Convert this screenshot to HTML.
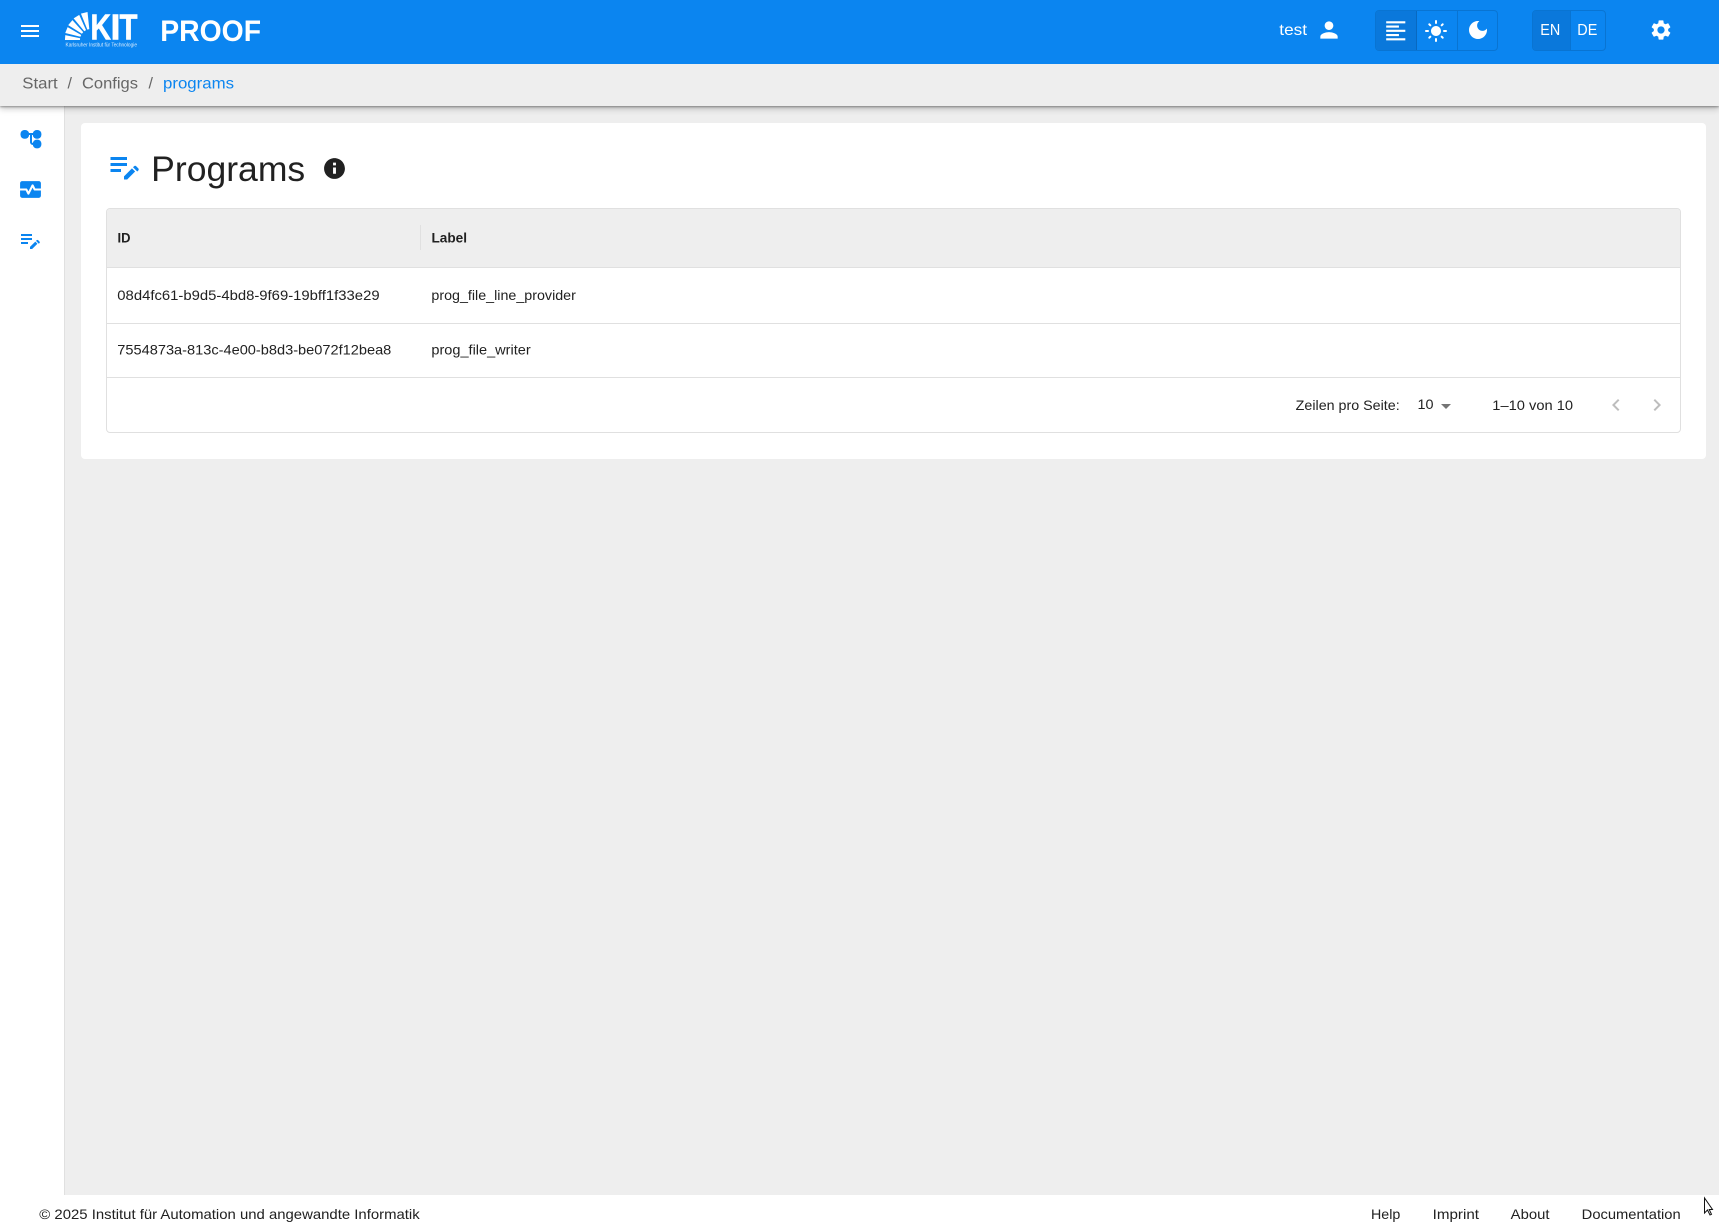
<!DOCTYPE html>
<html lang="de">
<head>
<meta charset="utf-8">
<title>PROOF - Programs</title>
<style>
html,body{margin:0;padding:0;width:1719px;height:1225px;overflow:hidden;background:#eeeeee;font-family:"Liberation Sans",sans-serif;}
.box{position:absolute;box-sizing:border-box;}
#hdr{left:0;top:0;width:1719px;height:64px;background:#0b85f0;z-index:3;}
#crumb{left:0;top:64px;width:1719px;height:42px;background:#eeeeee;z-index:2;box-shadow:0 1px 2px rgba(0,0,0,.35),0 3px 6px rgba(0,0,0,.2);}
#side{left:0;top:106px;width:65px;height:1089px;background:#fff;border-right:1px solid #e0e0e0;}
#card{left:81px;top:123px;width:1625px;height:336px;background:#fff;border-radius:4px;}
#tbl{left:106px;top:208px;width:1575px;height:225px;background:#fff;border:1px solid #e0e0e0;border-radius:4px;overflow:hidden;}
#thead{left:0;top:0;width:1573px;height:59px;background:#eeeeee;border-bottom:1px solid #e0e0e0;}
.rowline{left:0;width:1573px;height:1px;background:#e0e0e0;}
#coldiv{left:420px;top:225px;width:1px;height:25px;background:#e0e0e0;}
#foot{left:0;top:1195px;width:1719px;height:30px;background:#fff;}
.grp{top:10px;height:41px;border:1px solid rgba(0,0,0,.12);border-radius:4px;overflow:hidden;}
.sel{top:0;height:39px;left:0;background:#0a78db;}
.dv{top:0;height:39px;width:1px;background:rgba(0,0,0,.12);}
svg.ic{position:absolute;display:block;overflow:visible;}
#txt{position:absolute;left:0;top:0;z-index:6;pointer-events:none;}
#txt text{font-family:"Liberation Sans",sans-serif;}
</style>
</head>
<body>
<div class="box" id="side"></div>
<div class="box" id="card"></div>
<div class="box" id="tbl">
  <div class="box" id="thead"></div>
  <div class="box rowline" style="top:114px"></div>
  <div class="box rowline" style="top:168px"></div>
</div>
<div class="box" id="coldiv" style="z-index:1"></div>
<div class="box" id="crumb"></div>
<div class="box" id="hdr">
  <div class="box grp" style="left:1375px;width:123px">
    <div class="box sel" style="width:41px"></div>
    <div class="box dv" style="left:40px"></div>
    <div class="box dv" style="left:81px"></div>
  </div>
  <div class="box grp" style="left:1532px;width:74px">
    <div class="box sel" style="width:37px"></div>
    <div class="box dv" style="left:37px"></div>
  </div>
</div>
<div class="box" id="foot"></div>

<!-- header icons -->
<svg class="ic" style="left:18px;top:19px;z-index:5" width="24" height="24" viewBox="0 0 24 24" fill="#fff"><path d="M3 18h18v-2H3zm0-5h18v-2H3zm0-7v2h18V6z"/></svg>
<svg class="ic" style="left:1315.5px;top:17px;z-index:5" width="26" height="26" viewBox="0 0 24 24" fill="#fff"><path d="M12 12c2.21 0 4-1.79 4-4s-1.79-4-4-4-4 1.79-4 4 1.79 4 4 4m0 2c-2.67 0-8 1.34-8 4v2h16v-2c0-2.66-5.33-4-8-4"/></svg>
<svg class="ic" style="left:1382.75px;top:17.6px;z-index:5" width="25.5" height="25.5" viewBox="0 0 24 24" fill="#fff"><path d="M15 15H3v2h12v-2zm0-8H3v2h12V7zM3 13h18v-2H3v2zm0 8h18v-2H3v2zM3 3v2h18V3H3z"/></svg>
<svg class="ic" style="left:1424.3px;top:18.5px;z-index:5" width="24" height="24" viewBox="0 0 24 24" fill="#fff"><path d="M12 7c-2.76 0-5 2.24-5 5s2.24 5 5 5 5-2.24 5-5-2.24-5-5-5zM2 13h2c.55 0 1-.45 1-1s-.45-1-1-1H2c-.55 0-1 .45-1 1s.45 1 1 1zm18 0h2c.55 0 1-.45 1-1s-.45-1-1-1h-2c-.55 0-1 .45-1 1s.45 1 1 1zM11 2v2c0 .55.45 1 1 1s1-.45 1-1V2c0-.55-.45-1-1-1s-1 .45-1 1zm0 18v2c0 .55.45 1 1 1s1-.45 1-1v-2c0-.55-.45-1-1-1s-1 .45-1 1zM5.99 4.58c-.39-.39-1.03-.39-1.41 0-.39.39-.39 1.03 0 1.41l1.06 1.06c.39.39 1.03.39 1.41 0s.39-1.03 0-1.41L5.99 4.58zm12.37 12.37c-.39-.39-1.03-.39-1.41 0-.39.39-.39 1.03 0 1.41l1.06 1.06c.39.39 1.03.39 1.41 0 .39-.39.39-1.03 0-1.41l-1.06-1.06zm1.06-10.96c.39-.39.39-1.03 0-1.41-.39-.39-1.03-.39-1.41 0l-1.06 1.06c-.39.39-.39 1.03 0 1.41s1.03.39 1.41 0l1.06-1.06zM7.05 18.36c.39-.39.39-1.03 0-1.41-.39-.39-1.03-.39-1.41 0l-1.06 1.06c-.39.39-.39 1.03 0 1.41s1.03.39 1.41 0l1.06-1.06z"/></svg>
<svg class="ic" style="left:1465.7px;top:18px;z-index:5" width="24" height="24" viewBox="0 0 24 24" fill="#fff"><path d="M12 3c-4.97 0-9 4.03-9 9s4.03 9 9 9 9-4.03 9-9c0-.46-.04-.92-.1-1.36-.98 1.37-2.58 2.26-4.4 2.26-2.98 0-5.4-2.42-5.4-5.4 0-1.81.89-3.42 2.26-4.4-.44-.06-.9-.1-1.36-.1z"/></svg>
<svg class="ic" style="left:1648.5px;top:18px;z-index:5" width="24" height="24" viewBox="0 0 24 24" fill="#fff"><path d="M19.14 12.94c.04-.3.06-.61.06-.94 0-.32-.02-.64-.07-.94l2.03-1.58c.18-.14.23-.41.12-.61l-1.92-3.32c-.12-.22-.37-.29-.59-.22l-2.39.96c-.5-.38-1.03-.7-1.62-.94l-.36-2.54c-.04-.24-.24-.41-.48-.41h-3.84c-.24 0-.43.17-.47.41l-.36 2.54c-.59.24-1.13.57-1.62.94l-2.39-.96c-.22-.08-.47 0-.59.22L2.74 8.87c-.12.21-.08.47.12.61l2.03 1.58c-.05.3-.09.63-.09.94s.02.64.07.94l-2.03 1.58c-.18.14-.23.41-.12.61l1.92 3.32c.12.22.37.29.59.22l2.39-.96c.5.38 1.03.7 1.62.94l.36 2.54c.05.24.24.41.48.41h3.84c.24 0 .44-.17.47-.41l.36-2.54c.59-.24 1.13-.56 1.62-.94l2.39.96c.22.08.47 0 .59-.22l1.92-3.32c.12-.22.07-.47-.12-.61l-2.01-1.58zM12 15.6c-1.98 0-3.6-1.62-3.6-3.6s1.62-3.6 3.6-3.6 3.6 1.62 3.6 3.6-1.62 3.6-3.6 3.6z"/></svg>

<!-- KIT logo fan -->
<svg class="ic" style="left:0;top:0;z-index:5" width="160" height="64" viewBox="0 0 160 64" fill="#fff">
  <defs><clipPath id="fc"><rect x="60" y="10" width="40" height="30"/></clipPath></defs>
  <g clip-path="url(#fc)">
    <polygon points="80,39 65,36.9 65,43.1 80,41" transform="rotate(4 91 40)"/>
    <polygon points="80,39 64.5,36.8 64.5,43.2 80,41" transform="rotate(22 91 40)"/>
    <polygon points="80,39 64,36.7 64,43.3 80,41" transform="rotate(40 91 40)"/>
    <polygon points="80,39 63.5,36.7 63.5,43.3 80,41" transform="rotate(58 91 40)"/>
    <polygon points="80,39 63,36.6 63,43.4 80,41" transform="rotate(76 91 40)"/>
  </g>
</svg>

<!-- sidebar icons -->
<svg class="ic" style="left:18.5px;top:127px;z-index:1" width="24" height="24" viewBox="0 0 24 24" fill="#0b85f0"><rect x="1.5" y="3" width="8.6" height="8.8" rx="4"/><rect x="13.8" y="3" width="8.6" height="8.8" rx="4"/><rect x="13.8" y="12.6" width="8.6" height="8.8" rx="4"/><path d="M9 6h6v2h-2v7c0 .55.45 1 1 1h1v2h-1.01c-1.65 0-2.99-1.34-2.99-2.99V8H9z"/></svg>
<svg class="ic" style="left:18px;top:177px;z-index:1" width="25" height="25" viewBox="0 0 24 24" fill="#0b85f0"><path d="M15.11 12.45 14 10.24l-3.11 6.21c-.16.34-.51.55-.89.55s-.73-.21-.89-.55L7.38 13H2v5c0 1.1.9 2 2 2h16c1.1 0 2-.9 2-2v-5h-6c-.38 0-.73-.21-.89-.55z"/><path d="M20 4H4c-1.1 0-2 .9-2 2v5h6c.38 0 .73.21.89.55L10 13.76l3.11-6.21c.34-.68 1.45-.68 1.79 0L16.62 11H22V6c0-1.1-.9-2-2-2z"/></svg>
<svg class="ic" style="left:18px;top:227.5px;z-index:1" width="24" height="24" viewBox="0 0 24 24" fill="#0b85f0"><path d="M3 10h11v2H3zm0-2h11V6H3zm0 8h7v-2H3zm15.01-3.13.71-.71c.39-.39 1.02-.39 1.41 0l1.41 1.41c.39.39.39 1.02 0 1.41l-.71.71zm-.71.71L12 18.88V21h2.12l5.3-5.3z"/></svg>

<!-- title icons -->
<svg class="ic" style="left:106px;top:147.7px;z-index:1" width="36" height="36" viewBox="0 0 24 24" fill="#0b85f0"><path d="M3 10h11v2H3zm0-2h11V6H3zm0 8h7v-2H3zm15.01-3.13.71-.71c.39-.39 1.02-.39 1.41 0l1.41 1.41c.39.39.39 1.02 0 1.41l-.71.71zm-.71.71L12 18.88V21h2.12l5.3-5.3z"/></svg>
<svg class="ic" style="left:322px;top:156px;z-index:1" width="25" height="25" viewBox="0 0 24 24" fill="#212121"><path d="M12 2C6.48 2 2 6.48 2 12s4.48 10 10 10 10-4.48 10-10S17.52 2 12 2m1.4 15h-2.8v-6h2.8zm0-8h-2.8V6.4h2.8z"/></svg>

<!-- pagination icons -->
<svg class="ic" style="left:1433.5px;top:393.5px;z-index:1" width="24" height="24" viewBox="0 0 24 24" fill="#757575"><path d="M7 10l5 5 5-5z"/></svg>
<svg class="ic" style="left:1603.7px;top:393px;z-index:1" width="24" height="24" viewBox="0 0 24 24" fill="#bdbdbd"><path d="M15.41 7.41 14 6l-6 6 6 6 1.41-1.41L10.83 12z"/></svg>
<svg class="ic" style="left:1645px;top:393px;z-index:1" width="24" height="24" viewBox="0 0 24 24" fill="#bdbdbd"><path d="M10 6 8.59 7.41 13.17 12l-4.58 4.59L10 18l6-6z"/></svg>

<!-- cursor -->
<svg class="ic" style="left:1703px;top:1197px;z-index:7" width="10" height="20" viewBox="0 0 10 20"><path d="M1.5 1v15l3-3 2.5 5 1.5-.7-2.3-4.8H9.5z" fill="#fff" stroke="#111" stroke-width="1"/></svg>

<!-- all text -->
<svg id="txt" width="1719" height="1225" viewBox="0 0 1719 1225">
  <g fill="#fff">
    <text x="90.5" y="39.5" font-size="36" font-weight="700" textLength="20.5" lengthAdjust="spacingAndGlyphs" stroke="#fff" stroke-width=".6">K</text>
    <text x="110.5" y="39.5" font-size="36" font-weight="700" textLength="10" lengthAdjust="spacingAndGlyphs" stroke="#fff" stroke-width=".6">I</text>
    <text x="119.5" y="39.5" font-size="36" font-weight="700" textLength="18" lengthAdjust="spacingAndGlyphs" stroke="#fff" stroke-width=".6">T</text>
    <text x="65.5" y="46.5" font-size="5" textLength="71.5" lengthAdjust="spacingAndGlyphs" opacity=".85">Karlsruher Institut für Technologie</text>
    <text x="160.3" y="41" font-size="30" font-weight="700" textLength="100.7" lengthAdjust="spacingAndGlyphs">PROOF</text>
    <text x="1279.3" y="35" font-size="16" textLength="27.7" lengthAdjust="spacingAndGlyphs">test</text>
    <text x="1540.3" y="35" font-size="16" textLength="20" lengthAdjust="spacingAndGlyphs">EN</text>
    <text x="1577.3" y="35" font-size="16" textLength="20" lengthAdjust="spacingAndGlyphs">DE</text>
  </g>
  <g font-size="16" fill="#666666">
    <text x="22.3" y="88.7" textLength="35.4" lengthAdjust="spacingAndGlyphs">Start</text>
    <text x="67.5" y="88.7">/</text>
    <text x="82" y="88.7" textLength="56" lengthAdjust="spacingAndGlyphs">Configs</text>
    <text x="148.5" y="88.7">/</text>
    <text x="163" y="88.7" fill="#0b85f0" textLength="71" lengthAdjust="spacingAndGlyphs">programs</text>
  </g>
  <text x="151.2" y="181" font-size="35" fill="#212121" textLength="154" lengthAdjust="spacingAndGlyphs">Programs</text>
  <g font-size="14" fill="#212121">
    <text x="117.5" y="242.7" font-weight="700" textLength="13" lengthAdjust="spacingAndGlyphs">ID</text>
    <text x="431.5" y="242.7" font-weight="700" textLength="35.5" lengthAdjust="spacingAndGlyphs">Label</text>
    <text x="117.3" y="300" textLength="262.3" lengthAdjust="spacingAndGlyphs">08d4fc61-b9d5-4bd8-9f69-19bff1f33e29</text>
    <text x="431.4" y="300" textLength="144.5" lengthAdjust="spacingAndGlyphs">prog_file_line_provider</text>
    <text x="117.3" y="354.5" textLength="274" lengthAdjust="spacingAndGlyphs">7554873a-813c-4e00-b8d3-be072f12bea8</text>
    <text x="431.4" y="354.5" textLength="99.3" lengthAdjust="spacingAndGlyphs">prog_file_writer</text>
    <text x="1295.7" y="410" textLength="104" lengthAdjust="spacingAndGlyphs">Zeilen pro Seite:</text>
    <text x="1417.5" y="409" textLength="16" lengthAdjust="spacingAndGlyphs">10</text>
    <text x="1492.3" y="410" textLength="80.8" lengthAdjust="spacingAndGlyphs">1–10 von 10</text>
    <text x="39.3" y="1219" textLength="380.4" lengthAdjust="spacingAndGlyphs">© 2025 Institut für Automation und angewandte Informatik</text>
    <text x="1371" y="1219" textLength="29.3" lengthAdjust="spacingAndGlyphs">Help</text>
    <text x="1432.7" y="1219" textLength="46.3" lengthAdjust="spacingAndGlyphs">Imprint</text>
    <text x="1510.7" y="1219" textLength="38.8" lengthAdjust="spacingAndGlyphs">About</text>
    <text x="1581.7" y="1219" textLength="99" lengthAdjust="spacingAndGlyphs">Documentation</text>
  </g>
</svg>
</body>
</html>
